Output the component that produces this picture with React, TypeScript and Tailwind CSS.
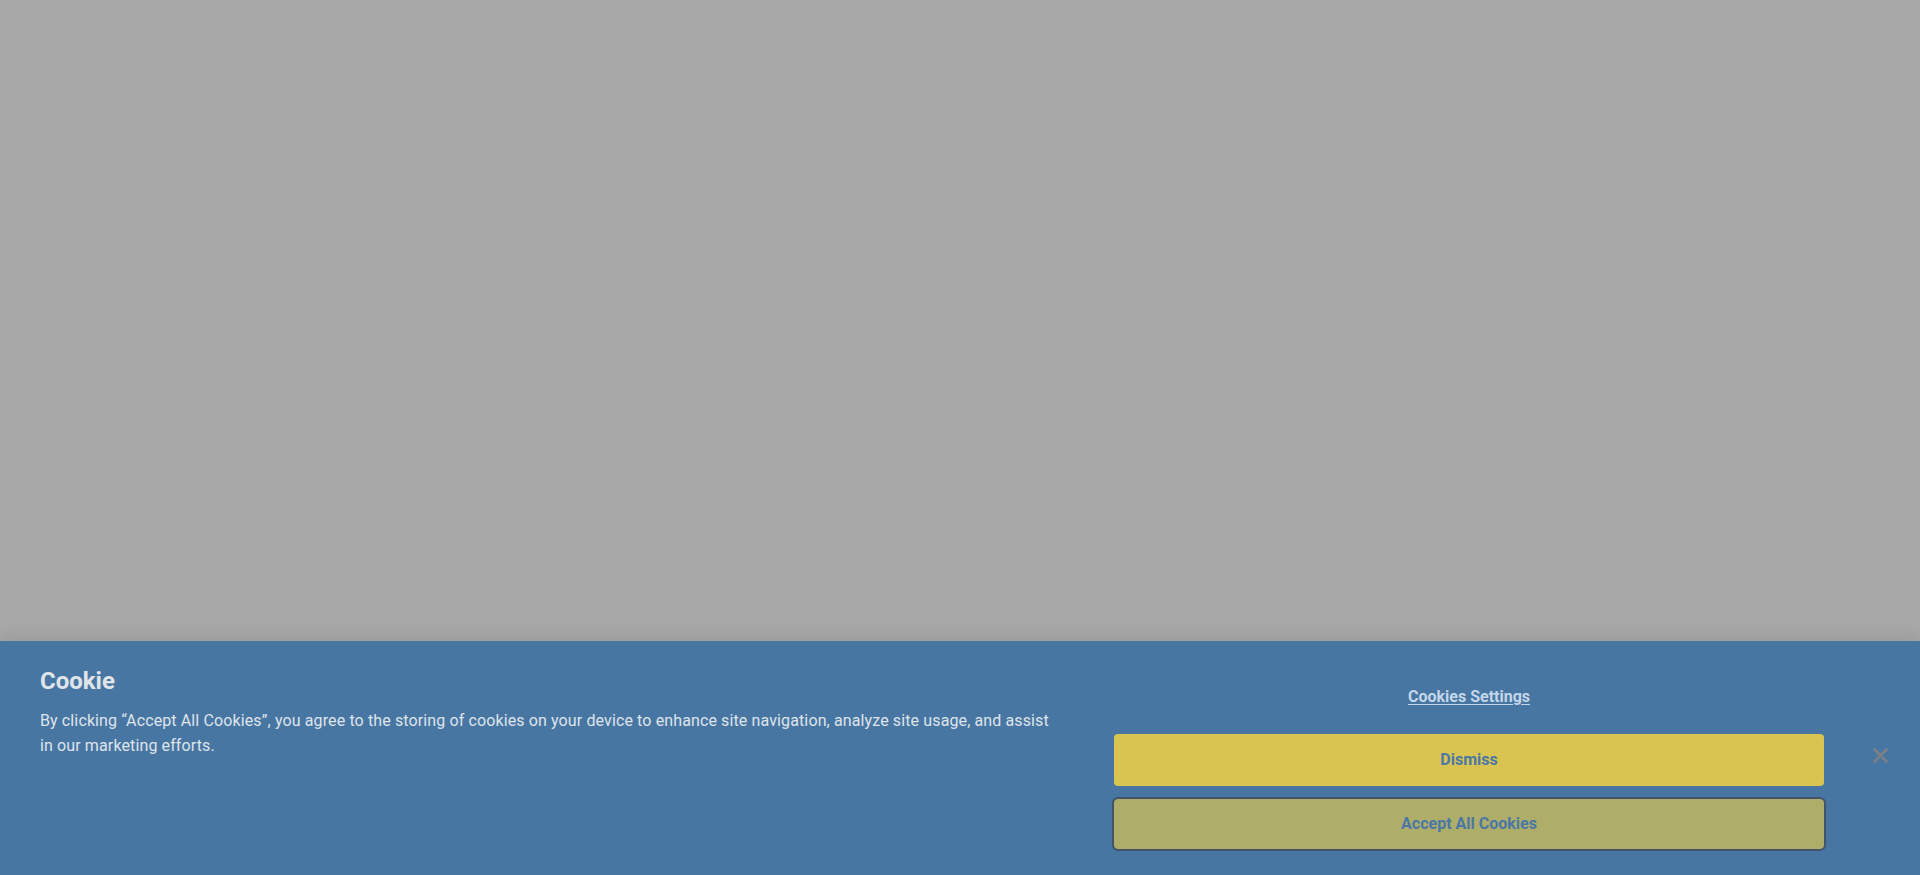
import React from 'react';

const CookieBanner: React.FC = () => {
  return (
    <div className="relative z-10 flex bg-[#4876a3] pt-6 pb-[26px] pl-10 shadow-[0_-6px_16px_rgba(0,0,0,0.08)]">
      <div className="w-[1020px] shrink-0">
        <h2 className="text-2xl leading-8 font-bold text-[#e1e5ea]">Cookie</h2>
        <p className="mt-3 text-base leading-[24.5px] tracking-[0.12px] text-[#dfe4ea]">
          By clicking “Accept All Cookies”, you agree to the storing of cookies on your device to enhance site navigation, analyze site usage, and assist in our marketing efforts.
        </p>
      </div>

      <div className="ml-[54px] flex w-[710px] shrink-0 flex-col items-center">
        <a href="#" className="mt-5 text-base leading-6 font-bold text-[#c3d6e9] underline underline-offset-[2px]">
          Cookies Settings
        </a>
        <button className="mt-[25px] h-[52px] w-full rounded-sm bg-[#d9c452] text-base font-bold text-[#4a77a4]">
          Dismiss
        </button>
        <button className="mt-[13px] h-[50px] w-full rounded-sm bg-[#aead6a] text-base font-bold text-[#4a77a4] outline-2 outline-[#445468]">
          Accept All Cookies
        </button>
      </div>

      <button aria-label="Close" className="mt-[83px] ml-[49px] h-[15px] w-[15px] shrink-0 self-start">
        <svg viewBox="0 0 15 15" className="h-[15px] w-[15px]">
          <path d="M1.5 1.5L13.5 13.5M13.5 1.5L1.5 13.5" stroke="#7b7f86" strokeWidth="2.8" strokeLinecap="round" />
        </svg>
      </button>
    </div>
  );
};

export default function App() {
  return (
    <div className="flex h-screen flex-col overflow-hidden bg-[#a8a8a8] font-['Roboto','Liberation_Sans',sans-serif]">
      <div className="flex-1" />
      <CookieBanner />
    </div>
  );
}
